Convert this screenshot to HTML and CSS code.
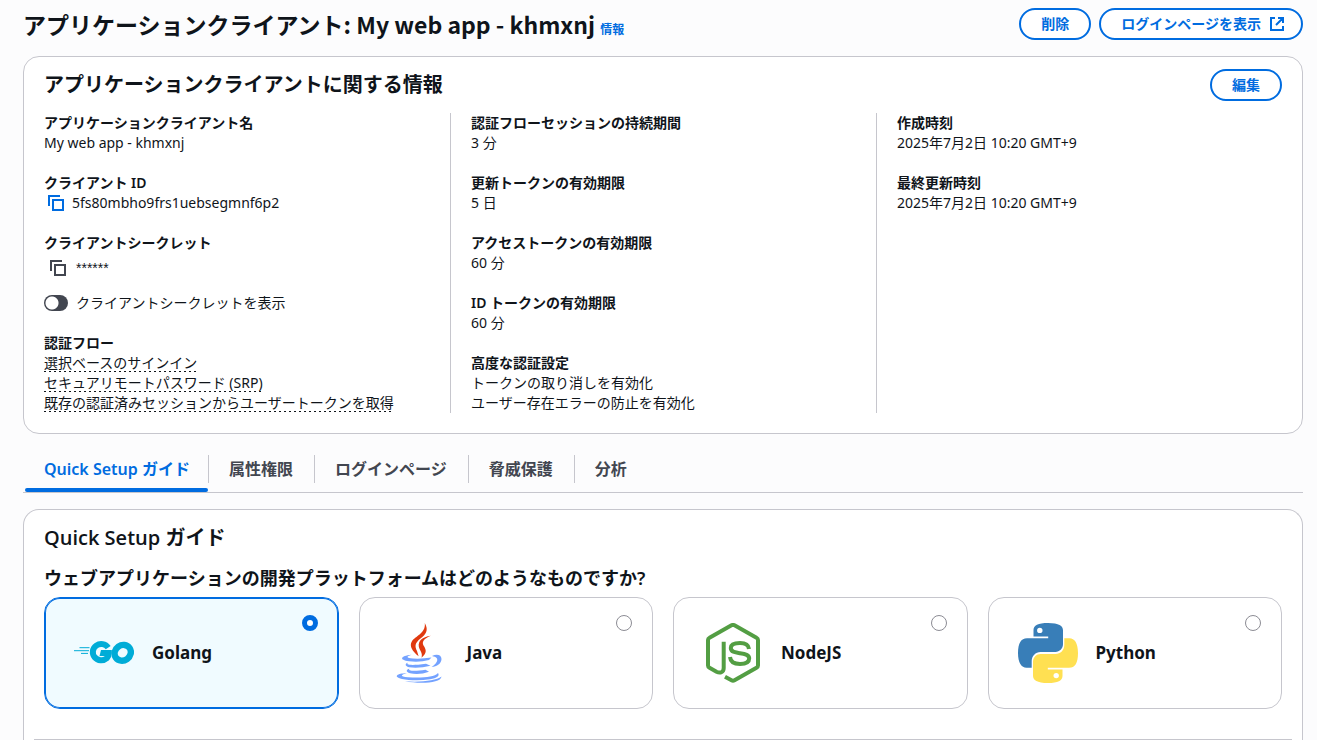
FILE: index.html
```html
<!DOCTYPE html>
<html lang="ja">
<head>
<meta charset="utf-8">
<meta name="viewport" content="width=device-width, initial-scale=1">
<title>アプリケーションクライアント: My web app - khmxnj</title>
<link rel="stylesheet" href="styles.css">
</head>
<body>
<main class="page">
  <header class="page-header">
    <h1 class="page-title">アプリケーションクライアント: My web app - khmxnj <a class="info-link" href="#info">情報</a></h1>
    <div class="actions">
      <button class="button" type="button">削除</button>
      <button class="button" type="button">ログインページを表示
        <svg class="icon" viewBox="0 0 16 16" aria-hidden="true"><path d="M6 2H2v12h12v-4M9 2h5v5M14 2L7 9"/></svg>
      </button>
    </div>
  </header>

  <section class="card">
    <div class="card-header">
      <h2 class="card-title">アプリケーションクライアントに関する情報</h2>
      <button class="button" type="button">編集</button>
    </div>
    <div class="columns">
      <dl class="column">
        <div><dt>アプリケーションクライアント名</dt><dd>My web app - khmxnj</dd></div>
        <div><dt>クライアント ID</dt>
          <dd class="copy-row">
            <button class="copy" type="button" aria-label="クライアント ID をコピー"><svg class="icon" viewBox="0 0 16 16"><path d="M1 11V1h11M5 5h10v10H5z"/></svg></button>
            <span>5fs80mbho9frs1uebsegmnf6p2</span>
          </dd>
        </div>
        <div><dt>クライアントシークレット</dt>
          <dd class="copy-row secret">
            <button class="copy" type="button" aria-label="クライアントシークレットをコピー"><svg class="icon" viewBox="0 0 16 16"><path d="M1 11V1h11M5 5h10v10H5z"/></svg></button>
            <span class="mask">******</span>
          </dd>
          <dd><label class="toggle"><input type="checkbox" role="switch">クライアントシークレットを表示</label></dd>
        </div>
        <div><dt>認証フロー</dt>
          <dd><span class="hint">選択ベースのサインイン</span></dd>
          <dd><span class="hint">セキュアリモートパスワード (SRP)</span></dd>
          <dd><span class="hint">既存の認証済みセッションからユーザートークンを取得</span></dd>
        </div>
      </dl>
      <dl class="column">
        <div><dt>認証フローセッションの持続期間</dt><dd>3 分</dd></div>
        <div><dt>更新トークンの有効期限</dt><dd>5 日</dd></div>
        <div><dt>アクセストークンの有効期限</dt><dd>60 分</dd></div>
        <div><dt>ID トークンの有効期限</dt><dd>60 分</dd></div>
        <div><dt>高度な認証設定</dt><dd>トークンの取り消しを有効化</dd><dd>ユーザー存在エラーの防止を有効化</dd></div>
      </dl>
      <dl class="column">
        <div><dt>作成時刻</dt><dd>2025年7月2日 10:20 GMT+9</dd></div>
        <div><dt>最終更新時刻</dt><dd>2025年7月2日 10:20 GMT+9</dd></div>
      </dl>
    </div>
  </section>

  <div class="tabs" role="tablist">
    <button class="tab" type="button" role="tab" aria-selected="true">Quick Setup ガイド</button>
    <button class="tab" type="button" role="tab" aria-selected="false">属性権限</button>
    <button class="tab" type="button" role="tab" aria-selected="false">ログインページ</button>
    <button class="tab" type="button" role="tab" aria-selected="false">脅威保護</button>
    <button class="tab" type="button" role="tab" aria-selected="false">分析</button>
  </div>

  <section class="card guide">
    <h2 class="card-title">Quick Setup ガイド</h2>
    <fieldset class="platforms">
      <legend>ウェブアプリケーションの開発プラットフォームはどのようなものですか?</legend>
      <div class="tiles">
        <label class="tile">
          <svg class="logo" viewBox="0 0 60 60" aria-hidden="true">
            <path d="M5.5 24.7H15.5M0 27.7H15M7 30.4H14" fill="none" stroke="#00acd7" stroke-width="1"/>
            <path d="M34.2 24.6A8.4 8.1 0 1 0 32.8 35.2Q34.8 33 34.8 30H27" fill="none" stroke="#00acd7" stroke-width="6"/>
            <path d="M27 27L25.500 33H31V27Z" fill="#00acd7"/>
            <ellipse cx="48.7" cy="29.8" rx="8.4" ry="7.6" transform="rotate(-35 48.7 29.8)" fill="none" stroke="#00acd7" stroke-width="6.4"/>
          </svg>
          <span>Golang</span><input type="radio" name="platform" checked>
        </label>
        <label class="tile">
          <svg class="logo" viewBox="0 0 60 60" aria-hidden="true">
            <g fill="#e0390f">
              <path d="M35.8 0C40 7.5 36.7 11.5 31.5 15.5C26 20 25.5 23 28 28L29.6 33.3C23.5 28.5 20 23 22.8 18.5C26 13 37 10.5 35.8 0Z"/>
              <path d="M41.8 12.7C35 15.5 32.6 18.5 34.5 22.5C37.5 27 38 30 32.5 34.8C34 29.5 30.5 27.5 29.8 23.5C29 18 33 14 41.8 12.7Z"/>
            </g>
            <g fill="#74a2ff">
              <path d="M22.5 31.8C17 33.5 17 35 24 35.5Q33 36 42.5 34.5L40 37Q31 39.5 20 38.3C10 37 11 33 22.5 31.8Z"/>
              <path d="M43 33C48 30.5 52.500 32 52.500 36C52.500 40.500 48 43.500 42.500 44C47 41 49 38 48 35.500C47 33.500 45 33.800 43 33Z"/>
              <path d="M19 39.8C16 42 23 42.7 37 40.7L41.5 42.7Q30 45.7 20 44.3C15.5 43 16 40.5 19 39.8Z"/>
              <path d="M20.5 45.8C18 48 26 48.5 36.5 46.8L40 48.7Q31 52 21 50.3C16.5 49 17 46.5 20.5 45.8Z"/>
              <path d="M18 50.2C12 51.5 10 53.5 19 54.2C32 55 45 54.5 49 50C51 53 48 55 41 56.3C31 58 20 57.5 13 56C3 53.5 9 50 18 50.2Z"/>
              <path d="M16 58.3C33 59.5 47 57.5 52.5 53.5C52 60.5 30 61 16 58.3Z"/>
            </g>
          </svg>
          <span>Java</span><input type="radio" name="platform">
        </label>
        <label class="tile">
          <svg class="logo" viewBox="0 0 60 60" aria-hidden="true" fill="none" stroke="#539e43" stroke-width="4" stroke-linejoin="round">
            <path d="M20.7 18.7V45C20.7 49.5 17 50.5 13.5 48.7L6.5 44.8Q5 44 5 42.5V17Q5 15.5 6.5 14.7L28.5 2.3Q30 1.5 31.5 2.3L53.5 14.7Q55 15.5 55 17V42.5Q55 44 53.5 44.8L31.5 57.3Q30 58.2 28.5 57.3L22 53.8"/>
            <path d="M46 26C45.5 21.5 41.5 20 37 20C31 20 27.8 22 27.8 25C27.8 29 32 29.5 37 30.2C42.5 31 46.2 31.8 46.2 35.3C46.2 39.5 42 41 37 41C31 41 27.5 39 27 34"/>
          </svg>
          <span>NodeJS</span><input type="radio" name="platform">
        </label>
        <label class="tile">
          <svg class="logo" viewBox="0 0 60 60" aria-hidden="true">
            <defs><path id="snake" fill-rule="evenodd" d="M30 0C20 0 15.5 2.5 15.5 7V13.6H30.2V15.2H9C3 15.2 0 20 0 30C0 40 3.5 44.7 8.5 44.7H13.7V38C13.7 33 17.5 29 22.5 29H37.5C41.5 29 45 25.5 45 21.3V7.3C45 3 41 0 30 0ZM21.8 4.7A2.7 2.7 0 1 0 21.8 10.1A2.7 2.7 0 1 0 21.8 4.7Z"/></defs>
            <use href="#snake" fill="#387eb8"/>
            <use href="#snake" fill="#ffe052" transform="rotate(180 30 30)"/>
          </svg>
          <span>Python</span><input type="radio" name="platform">
        </label>
      </div>
    </fieldset>
    <hr class="divider">
  </section>
</main>
</body>
</html>
```
FILE: styles.css
```css
:root {
  --text: #0f141a;
  --muted: #424650;
  --blue: #006ce0;
  --line: #c6c6cd;
}

* { box-sizing: border-box; }

body {
  margin: 0;
  background: #fcfcfd;
  color: var(--text);
  font: 14px/20px "Noto Sans", "Noto Sans CJK JP", sans-serif;
}

h1, h2, dl, dd, fieldset, legend { margin: 0; padding: 0; }

button, input { font: inherit; margin: 0; }

.page {
  display: flex;
  flex-direction: column;
  height: 100vh;
  padding: 8px 14px 0 23px;
  overflow: hidden;
}

.page-header {
  display: flex;
  justify-content: space-between;
  align-items: center;
  margin-bottom: 16px;
}

.page-title {
  font-family: "Noto Sans CJK JP", sans-serif;
  font-size: 23px;
  line-height: 28px;
  font-weight: 700;
}

.info-link {
  color: var(--blue);
  font-size: 12px;
  line-height: 16px;
  font-weight: 700;
  text-decoration: none;
}

.actions { display: flex; gap: 8px; }

.button {
  display: inline-flex;
  align-items: center;
  gap: 8px;
  padding: 4px 20px;
  border: 2px solid var(--blue);
  border-radius: 20px;
  background: #fff;
  color: var(--blue);
  font-weight: 700;
  white-space: nowrap;
}

.actions .button:last-child { padding-right: 16px; }

.icon {
  display: block;
  width: 16px;
  height: 16px;
  fill: none;
  stroke: currentColor;
  stroke-width: 2;
}

.card {
  flex: none;
  border: 1px solid var(--line);
  border-radius: 16px;
  background: #fff;
}

.card-header {
  display: flex;
  justify-content: space-between;
  align-items: center;
  padding: 12px 20px;
}

.card-title {
  font-family: "Open Sans", "Noto Sans CJK JP", sans-serif;
  font-size: 20px;
  line-height: 24px;
  font-weight: 600;
}

.columns {
  display: grid;
  grid-template-columns: repeat(3, 1fr);
  padding-bottom: 20px;
}

.column { display: flex; flex-direction: column; gap: 20px; padding: 0 20px; }
.column + .column { border-left: 1px solid var(--line); }

dt { font-weight: 600; }

.copy-row { display: flex; align-items: center; gap: 8px; padding-left: 4px; }
.copy { padding: 0; border: 0; background: none; color: var(--blue); }
.secret { height: 30px; padding-left: 6px; gap: 10px; margin-bottom: 10px; }
.secret .copy { color: var(--muted); }
.mask { font-family: "Liberation Sans", sans-serif; }

.toggle { display: flex; align-items: center; gap: 8px; }
.toggle input {
  appearance: none;
  width: 24px;
  height: 16px;
  border-radius: 8px;
  background: radial-gradient(circle at 8px 8px, #fff 6px, var(--muted) 7px);
}

.hint {
  display: inline-block;
  height: 19px;
  background: repeating-linear-gradient(90deg, var(--text) 0 2px, transparent 2px 5px) left bottom / 100% 1px no-repeat;
  vertical-align: top;
}

.tabs { display: flex; margin: 12px 0 16px; border-bottom: 1px solid var(--line); }

.tab {
  position: relative;
  padding: 11px 21px;
  border: 0;
  background: none;
  color: var(--muted);
  font-size: 16px;
  line-height: 24px;
  font-weight: 600;
}
.tab:first-child { padding-right: 18px; }
.tab + .tab::before {
  content: "";
  position: absolute;
  left: 0;
  top: 9px;
  height: 28px;
  border-left: 1px solid var(--line);
}
.tab[aria-selected="true"] { color: var(--blue); }
.tab[aria-selected="true"]::after {
  content: "";
  position: absolute;
  left: 2px;
  right: 0;
  bottom: 0;
  height: 4px;
  border-radius: 2px;
  background: var(--blue);
}

.guide {
  flex: 1 0 auto;
  border-bottom: 0;
  border-radius: 16px 16px 0 0;
  padding-top: 16px;
}
.guide .card-title { margin: 0 20px 16px; }

.platforms { border: 0; margin: 0 20px; min-width: 0; }
.platforms legend { font-size: 18px; line-height: 24px; font-weight: 600; }

.tiles {
  display: grid;
  grid-template-columns: repeat(4, 1fr);
  gap: 20px;
  padding-top: 7px;
}

.tile {
  display: flex;
  align-items: center;
  gap: 18px;
  height: 112px;
  padding: 17px 20px 17px 29px;
  border: 1px solid var(--line);
  border-radius: 16px;
  font-size: 17px;
  line-height: 24px;
  font-weight: 700;
}
.tile:has(input:checked) {
  border-color: var(--blue);
  background: #f0fbff;
  box-shadow: inset 0 0 0 1px var(--blue);
}

.logo { width: 60px; height: 60px; flex: none; }

.tile input {
  appearance: none;
  align-self: flex-start;
  width: 16px;
  height: 16px;
  margin-left: auto;
  border: 1px solid #8c8c94;
  border-radius: 50%;
  background: #fff;
}
.tile input:checked { border: 5px solid var(--blue); }

.divider { margin: 30px 10px 0; border: 0; border-top: 1px solid var(--line); }
```
